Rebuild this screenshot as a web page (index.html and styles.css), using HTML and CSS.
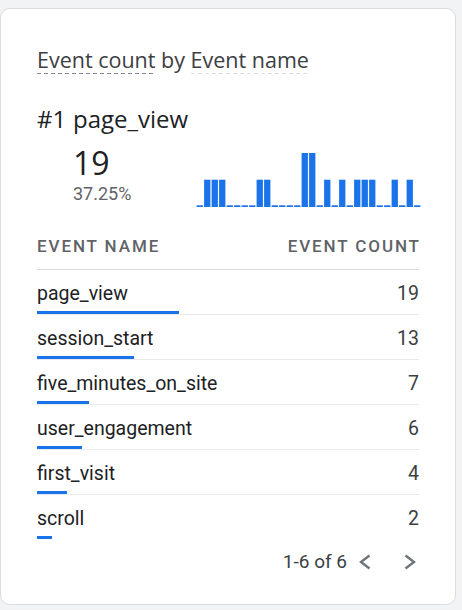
FILE: index.html
```html
<!DOCTYPE html>
<html lang="en">
<head>
<meta charset="utf-8">
<title>Event count by Event name</title>
<link rel="stylesheet" href="styles.css">
</head>
<body>
<div class="card">
  <h2 class="title"><span class="dim dim-metric">Event count</span> by <span class="dim dim-name">Event name</span></h2>
  <div class="top">
    <span class="rank">#1</span><span class="top-name">page_view</span>
  </div>
  <div class="summary">
    <div class="figs">
      <div class="big">19</div>
      <div class="pct">37.25%</div>
    </div>
    <svg class="spark" width="225" height="56" viewBox="0 0 225 56" aria-hidden="true">
      <g fill="#1a73e8">
        <rect x="0.6" y="54.3" width="6.3" height="1.7"/>
        <rect x="8.1" y="28.7" width="6.3" height="27.3"/>
        <rect x="15.6" y="28.7" width="6.3" height="27.3"/>
        <rect x="23.1" y="28.7" width="6.3" height="27.3"/>
        <rect x="30.6" y="54.3" width="6.3" height="1.7"/>
        <rect x="38.1" y="54.3" width="6.3" height="1.7"/>
        <rect x="45.6" y="54.3" width="6.3" height="1.7"/>
        <rect x="53.1" y="54.3" width="6.3" height="1.7"/>
        <rect x="60.6" y="28.7" width="6.3" height="27.3"/>
        <rect x="68.1" y="28.7" width="6.3" height="27.3"/>
        <rect x="75.6" y="54.3" width="6.3" height="1.7"/>
        <rect x="83.1" y="54.3" width="6.3" height="1.7"/>
        <rect x="90.6" y="54.3" width="6.3" height="1.7"/>
        <rect x="98.1" y="54.3" width="6.3" height="1.7"/>
        <rect x="105.6" y="2" width="6.3" height="54"/>
        <rect x="113.1" y="2" width="6.3" height="54"/>
        <rect x="120.6" y="54.3" width="6.3" height="1.7"/>
        <rect x="128.1" y="28.7" width="6.3" height="27.3"/>
        <rect x="135.6" y="54.3" width="6.3" height="1.7"/>
        <rect x="143.1" y="28.7" width="6.3" height="27.3"/>
        <rect x="150.6" y="54.3" width="6.3" height="1.7"/>
        <rect x="158.1" y="28.7" width="6.3" height="27.3"/>
        <rect x="165.6" y="28.7" width="6.3" height="27.3"/>
        <rect x="173.1" y="28.7" width="6.3" height="27.3"/>
        <rect x="180.6" y="54.3" width="6.3" height="1.7"/>
        <rect x="188.1" y="54.3" width="6.3" height="1.7"/>
        <rect x="195.6" y="28.7" width="6.3" height="27.3"/>
        <rect x="203.1" y="54.3" width="6.3" height="1.7"/>
        <rect x="210.6" y="28.7" width="6.3" height="27.3"/>
        <rect x="218.1" y="54.3" width="6.3" height="1.7"/>
      </g>
    </svg>
  </div>
  <div class="table">
    <div class="thead"><span>Event name</span><span>Event count</span></div>
    <div class="row">
      <div class="cells"><span class="name">page_view</span><span class="num">19</span></div>
      <div class="bar" style="width:37.25%"></div>
    </div>
    <div class="row">
      <div class="cells"><span class="name">session_start</span><span class="num">13</span></div>
      <div class="bar" style="width:25.49%"></div>
    </div>
    <div class="row">
      <div class="cells"><span class="name">five_minutes_on_site</span><span class="num">7</span></div>
      <div class="bar" style="width:13.73%"></div>
    </div>
    <div class="row">
      <div class="cells"><span class="name">user_engagement</span><span class="num">6</span></div>
      <div class="bar" style="width:11.76%"></div>
    </div>
    <div class="row">
      <div class="cells"><span class="name">first_visit</span><span class="num">4</span></div>
      <div class="bar" style="width:7.84%"></div>
    </div>
    <div class="row">
      <div class="cells"><span class="name">scroll</span><span class="num">2</span></div>
      <div class="bar" style="width:3.92%"></div>
    </div>
  </div>
  <div class="pager">
    <span class="range">1-6 of 6</span>
    <svg class="chev chev-prev" width="16" height="18" viewBox="0 0 16 18" aria-hidden="true"><polyline points="13.5,2.5 5,9 13.5,15.5"/></svg>
    <svg class="chev chev-next" width="16" height="18" viewBox="0 0 16 18" aria-hidden="true"><polyline points="2.5,2.5 11,9 2.5,15.5"/></svg>
  </div>
</div>
</body>
</html>
```
FILE: styles.css
```css
* { box-sizing: border-box; }

html, body {
  margin: 0;
  padding: 0;
}

body {
  background: #f1f3f4;
  font-family: Roboto, "Liberation Sans", sans-serif;
  color: #202124;
}

.card {
  margin-top: 8px;
  width: 456px;
  background: #fff;
  border: 1px solid #dadce0;
  border-radius: 10px;
  padding: 39px 36px 28px 36px;
}

.title {
  margin: 0;
  height: 26px;
  font-family: "Open Sans", Roboto, sans-serif;
  font-weight: 400;
  font-size: 21.5px;
  line-height: 24px;
  color: #3c4043;
  white-space: nowrap;
}

.dim {
  display: inline-block;
  line-height: 24px;
  padding-bottom: 2px;
  background-repeat: repeat-x;
  background-position: left bottom;
  background-size: 7px 1px;
}

.dim-metric {
  background-image: linear-gradient(to right, #80868b 0 4px, transparent 4px 7px);
}

.dim-name {
  background-image: linear-gradient(to right, #dadce0 0 4px, transparent 4px 7px);
}

.top {
  margin-top: 31px;
  display: flex;
  font-family: "Open Sans", Roboto, sans-serif;
  font-size: 24px;
  line-height: 28px;
  color: #202124;
}

.rank {
  width: 36px;
}

.summary {
  margin-top: 12px;
  display: flex;
  align-items: flex-end;
  padding-left: 36px;
}

.figs {
  width: 123px;
  flex-shrink: 0;
}

.big {
  font-family: "Open Sans", Roboto, sans-serif;
  font-size: 32px;
  line-height: 36px;
  color: #202124;
}

.pct {
  font-size: 18px;
  line-height: 26px;
  color: #5f6368;
}

.spark {
  display: block;
  flex-shrink: 0;
  margin-right: -2px;
}

.thead {
  display: flex;
  justify-content: space-between;
  padding: 29px 0 13px 0;
  border-bottom: 1px solid #dadce0;
  font-size: 17px;
  font-weight: 500;
  line-height: 20px;
  letter-spacing: 1.9px;
  text-transform: uppercase;
  color: #5f6368;
}

.thead span:last-child {
  margin-right: -1.9px;
}

.row {
  padding-top: 14px;
  border-bottom: 1px solid #e8eaed;
}

.row:last-child {
  border-bottom: none;
}

.cells {
  display: flex;
  justify-content: space-between;
  font-size: 19.5px;
  line-height: 20px;
}

.name {
  color: #202124;
}

.num {
  color: #3c4043;
}

.bar {
  margin-top: 7px;
  height: 3px;
  background: #1a73e8;
}

.pager {
  margin-top: 8px;
  display: flex;
  justify-content: flex-end;
  align-items: center;
  height: 29px;
  font-size: 19px;
  line-height: 28px;
  color: #3c4043;
}

.chev {
  display: block;
  fill: none;
  stroke: #70757a;
  stroke-width: 2.4;
}

.chev-prev {
  margin-left: 9px;
}

.chev-next {
  margin-left: 31px;
}
```
